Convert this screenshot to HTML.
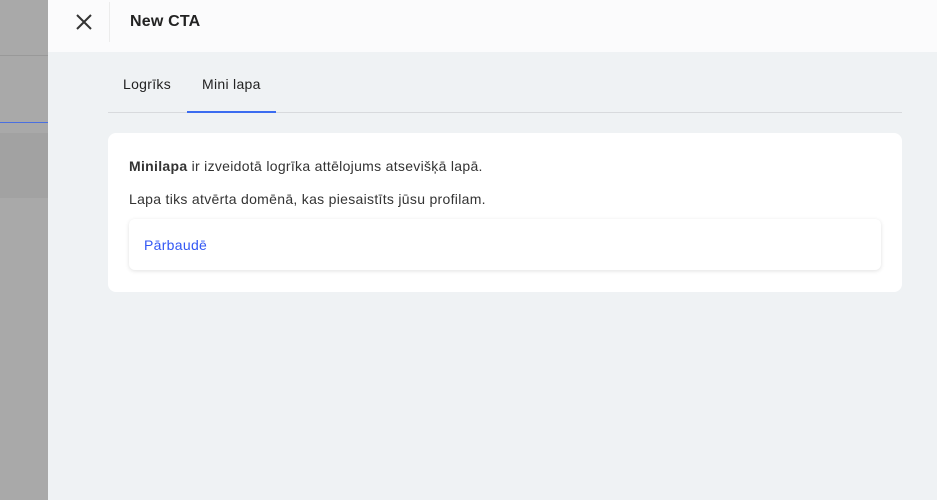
<!DOCTYPE html>
<html><head><meta charset="utf-8"><style>
*{margin:0;padding:0;box-sizing:border-box}
body{width:937px;height:500px;overflow:hidden;font-family:"Liberation Sans",sans-serif;background:#eff2f4;position:relative;color:#333;letter-spacing:0.3px}
.ov{position:absolute;left:0;top:0;width:48px;height:500px;background:#a9a9a9}
.ov .l1{position:absolute;top:55px;left:0;width:48px;height:1px;background:#999}
.ov .l2{position:absolute;top:122px;left:0;width:48px;height:1px;background:#4a6fe0}
.ov .b{position:absolute;top:133px;left:0;width:48px;height:65px;background:#a2a2a2}
.hd{position:absolute;left:48px;top:0;right:0;height:52px;background:#fbfbfc}
.sep{position:absolute;left:109px;top:2px;width:1px;height:40px;background:#ececec}
.x{position:absolute;left:75px;top:13px}
.title{position:absolute;left:130px;top:13px;font-size:16px;font-weight:bold;color:#222;letter-spacing:0.2px}
.tabs{position:absolute;left:108px;top:0;width:794px;height:113px;border-bottom:1px solid #d8dadd}
.tab{position:absolute;top:76px;font-size:14px;color:#222}
.ul{position:absolute;left:79px;top:111px;width:89px;height:2px;background:#3b6cf0}
.card{position:absolute;left:108px;top:133px;width:794px;height:159px;background:#fff;border-radius:8px}
.p{position:absolute;left:21px;font-size:14px;color:#333}
.in{position:absolute;left:21px;top:86px;width:752px;height:51px;border-radius:6px;background:#fff;box-shadow:0 1px 4px rgba(0,0,0,.12)}
.in span{position:absolute;left:15px;top:18px;font-size:14px;color:#3358f4}
</style></head><body>
<div class="ov"><div class="l1"></div><div class="l2"></div><div class="b"></div></div>
<div class="hd"></div>
<div class="sep"></div>
<svg class="x" width="18" height="18" viewBox="0 0 18 18"><path d="M2 2L16 16M16 2L2 16" stroke="#333" stroke-width="2"/></svg>
<div class="title">New CTA</div>
<div class="tabs"><span class="tab" style="left:15px">Logrīks</span><span class="tab" style="left:94px">Mini lapa</span><div class="ul"></div></div>
<div class="card">
<div class="p" style="top:25px"><b>Minilapa</b> ir izveidotā logrīka attēlojums atsevišķā lapā.</div>
<div class="p" style="top:58px">Lapa tiks atvērta domēnā, kas piesaistīts jūsu profilam.</div>
<div class="in"><span>Pārbaudē</span></div>
</div>
</body></html>
